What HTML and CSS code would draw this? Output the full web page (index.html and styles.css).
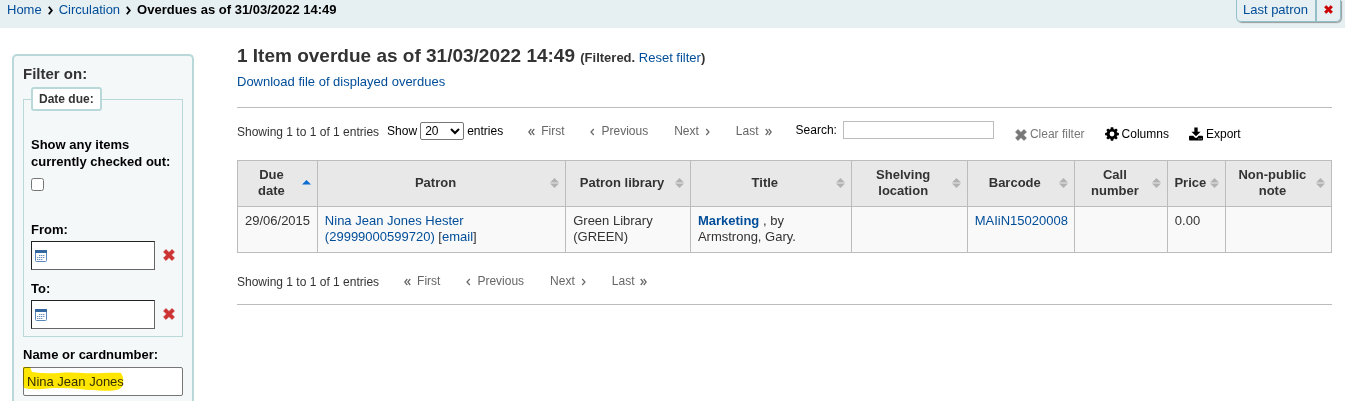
FILE: index.html
```html
<!DOCTYPE html>
<html lang="en">
<head>
<meta charset="utf-8">
<title>Overdues as of 31/03/2022 14:49</title>
<link rel="stylesheet" href="styles.css">
</head>
<body>
<svg class="sprite" aria-hidden="true">
  <symbol id="times" viewBox="0 0 12 12"><path d="M3 .6 6 3.600 9 .6 11.400 3 8.400 6 11.400 9 9 11.400 6 8.400 3 11.400 .6 9 3.600 6 .6 3Z" fill="currentColor" stroke="currentColor" stroke-width=".8" stroke-linejoin="round"/></symbol>
  <symbol id="gear" viewBox="0 0 14 14"><path fill="currentColor" fill-rule="evenodd" d="M5.800 .3h2.400l.4 1.800 1 .4 1.500-1 1.600 1.600-1 1.500.4 1 1.800.3v2.300l-1.800.3-.4 1 1 1.500-1.600 1.600-1.500-1-1 .4-.4 1.700H5.800l-.3-1.700-1-.4-1.500 1-1.700-1.600 1-1.500-.4-1L.1 8.200V5.900l1.800-.3.4-1-1-1.500L3 1.500l1.500 1 1-.4ZM7 4.600a2.400 2.400 0 1 0 0 4.800 2.400 2.400 0 0 0 0-4.800Z"/></symbol>
  <symbol id="download" viewBox="0 0 15 14"><path fill="currentColor" d="M5.700 0h3.600v4.500h3.100L7.500 9.400 2.600 4.500h3.100Z"/><path fill="currentColor" fill-rule="evenodd" d="M1 9h3.600l1.700 1.700q1.200 1 2.400 0L10.400 9H14q1 0 1 1v3q0 1-1 1H1q-1 0-1-1v-3q0-1 1-1Zm9 2.700v1h1.200v-1Zm2.400 0v1h1.200v-1Z"/></symbol>
  <symbol id="calendar" viewBox="0 0 12 12"><rect x=".5" y=".5" width="11" height="11" rx="1" fill="#fff" stroke="#5a87bb"/><path d="M0 0h12v3H0Z" fill="#3568a0"/><path d="M4 5.500h6M2 7.500h8M2 9.500h6" stroke="#6b90c0" stroke-width="1" stroke-dasharray="1.400 .6"/></symbol>
  <symbol id="both" viewBox="0 0 9 10"><path d="M4.500 0 9 4.500H0ZM0 5.500h9L4.500 10Z" fill="#b2b2b2"/></symbol>
  <symbol id="up" viewBox="0 0 9 10"><path d="M4.500 2 9 6.500H0Z" fill="#0d6cd0"/></symbol>
  <symbol id="prev" viewBox="0 0 5 8"><path d="M3.800 1 1 4l2.800 3" fill="none" stroke="currentColor" stroke-width="1.200"/></symbol>
  <symbol id="next" viewBox="0 0 5 8"><path d="M1.200 1 4 4 1.200 7" fill="none" stroke="currentColor" stroke-width="1.200"/></symbol>
  <symbol id="first" viewBox="0 0 7 8"><path d="M3.300 1 .8 4l2.500 3M6.300 1 3.800 4l2.500 3" fill="none" stroke="currentColor" stroke-width="1.200"/></symbol>
  <symbol id="last" viewBox="0 0 7 8"><path d="M.7 1l2.500 3L.7 7M3.700 1l2.500 3-2.500 3" fill="none" stroke="currentColor" stroke-width="1.200"/></symbol>
  <symbol id="crumb" viewBox="0 0 5 9"><path d="M.8.800 3.800 4.500.8 8.200" fill="none" stroke="currentColor" stroke-width="1.800"/></symbol>
</svg>

<header class="topbar">
  <nav class="breadcrumbs" aria-label="Breadcrumb">
    <a href="#">Home</a><svg class="crumb"><use href="#crumb"/></svg><a href="#">Circulation</a><svg class="crumb"><use href="#crumb"/></svg><strong>Overdues as of 31/03/2022 14:49</strong>
  </nav>
  <div class="last-patron">
    <a href="#">Last patron</a>
    <button type="button" class="dismiss" aria-label="Remove"><svg><use href="#times"/></svg></button>
  </div>
</header>

<div class="page">
  <aside>
    <form class="filters">
      <h4>Filter on:</h4>
      <fieldset>
        <legend>Date due:</legend>
        <label for="showall">Show any items currently checked out:</label>
        <input type="checkbox" id="showall">
        <label for="from">From:</label>
        <div class="date-row">
          <div class="date-box"><svg class="calendar"><use href="#calendar"/></svg><input type="text" id="from"></div>
          <button type="button" class="clear-date" aria-label="Clear from date"><svg><use href="#times"/></svg></button>
        </div>
        <label for="to">To:</label>
        <div class="date-row">
          <div class="date-box"><svg class="calendar"><use href="#calendar"/></svg><input type="text" id="to"></div>
          <button type="button" class="clear-date" aria-label="Clear to date"><svg><use href="#times"/></svg></button>
        </div>
      </fieldset>
      <label for="borname" class="name-label">Name or cardnumber:</label>
      <div class="name-box">
        <input type="text" id="borname" value="Nina Jean Jones">
        <svg class="marker" viewBox="0 0 102 24"><path d="M0 0h7l2 5c20 3 30-1 50 1 15 1 30-1 39 0q4 6 1 14c-5 6-20 3-34 3-15-2-32-3-45-1q-12 1-19-1-2-9-1-21Z" fill="#ffe600"/></svg>
      </div>
    </form>
  </aside>

  <main>
    <h1>1 Item overdue as of 31/03/2022 14:49 <span class="filtered">(Filtered. <a href="#">Reset filter</a>)</span></h1>
    <p class="download"><a href="#">Download file of displayed overdues</a></p>
    <section class="results">
      <div class="toolbar">
        <span class="info">Showing 1 to 1 of 1 entries</span>
        <label class="length">Show <select><option>20</option></select> entries</label>
        <nav class="pager" aria-label="Pages">
          <button type="button" disabled><svg class="wide"><use href="#first"/></svg>First</button>
          <button type="button" disabled><svg><use href="#prev"/></svg>Previous</button>
          <button type="button" disabled>Next<svg><use href="#next"/></svg></button>
          <button type="button" disabled>Last<svg class="wide"><use href="#last"/></svg></button>
        </nav>
        <label class="search">Search: <input type="search"></label>
        <div class="actions">
          <button type="button" class="muted"><svg class="icon-times"><use href="#times"/></svg>Clear filter</button>
          <button type="button"><svg><use href="#gear"/></svg>Columns</button>
          <button type="button"><svg><use href="#download"/></svg>Export</button>
        </div>
      </div>
      <table>
        <colgroup><col class="c-due"><col class="c-patron"><col class="c-library"><col class="c-title"><col class="c-shelf"><col class="c-barcode"><col class="c-call"><col class="c-price"><col class="c-note"></colgroup>
        <thead>
          <tr>
            <th><div><span>Due date</span><svg><use href="#up"/></svg></div></th>
            <th><div><span>Patron</span><svg><use href="#both"/></svg></div></th>
            <th><div><span>Patron library</span><svg><use href="#both"/></svg></div></th>
            <th><div><span>Title</span><svg><use href="#both"/></svg></div></th>
            <th><div><span>Shelving location</span><svg><use href="#both"/></svg></div></th>
            <th><div><span>Barcode</span><svg><use href="#both"/></svg></div></th>
            <th><div><span>Call number</span><svg><use href="#both"/></svg></div></th>
            <th><div><span>Price</span><svg><use href="#both"/></svg></div></th>
            <th><div><span>Non-public note</span><svg><use href="#both"/></svg></div></th>
          </tr>
        </thead>
        <tbody>
          <tr>
            <td>29/06/2015</td>
            <td><a href="#">Nina Jean Jones Hester<br>(29999000599720)</a> [<a href="#">email</a>]</td>
            <td>Green Library (GREEN)</td>
            <td><a href="#"><b>Marketing</b></a> , by Armstrong, Gary.</td>
            <td></td>
            <td><a href="#">MAIiN15020008</a></td>
            <td></td>
            <td>0.00</td>
            <td></td>
          </tr>
        </tbody>
      </table>
      <div class="toolbar bottom">
        <span class="info">Showing 1 to 1 of 1 entries</span>
        <nav class="pager" aria-label="Pages, bottom">
          <button type="button" disabled><svg class="wide"><use href="#first"/></svg>First</button>
          <button type="button" disabled><svg><use href="#prev"/></svg>Previous</button>
          <button type="button" disabled>Next<svg><use href="#next"/></svg></button>
          <button type="button" disabled>Last<svg class="wide"><use href="#last"/></svg></button>
        </nav>
      </div>
    </section>
  </main>
</div>
</body>
</html>
```
FILE: styles.css
```css
* { box-sizing: border-box; }

body {
  margin: 0;
  background: #fff;
  color: #333;
  font: 13px/16px "Liberation Sans", Arial, sans-serif;
}

a { color: #004d99; text-decoration: none; }
button, input, select { font: inherit; color: inherit; }
button { border: 0; padding: 0; background: none; }
svg { flex: none; }
.sprite { position: absolute; width: 0; height: 0; }

.topbar {
  display: flex;
  justify-content: space-between;
  align-items: flex-start;
  height: 28px;
  padding: 0 4px 0 7px;
  background: #e6eff2;
}
.breadcrumbs { display: flex; align-items: center; padding-top: 2px; color: #000; }
.crumb { width: 5px; height: 9px; margin: 0 6px; }

.last-patron {
  display: flex;
  height: 22px;
  border: 1px solid #93bfc9;
  border-top: 0;
  border-radius: 0 0 5px 5px;
  box-shadow: 1px 1px 1px #999;
}
.last-patron a { padding: 2px 7px 0 6px; }
.dismiss {
  width: 25px;
  padding-bottom: 2px;
  border-left: 2px solid #93bfc9;
  color: #c00;
}
.dismiss svg { width: 9px; height: 9px; }

.page {
  display: grid;
  grid-template-columns: 182px minmax(0, 1fr);
  gap: 43px;
  min-height: calc(100vh - 28px);
  padding: 26px 13px 0 12px;
}

aside {
  padding: 10px 9px 5px;
  border: 2px solid #b9d8d9;
  border-bottom: 0;
  border-radius: 5px 5px 0 0;
  background: #f4f8f9;
}
h4 { margin: 0 0 5px; font-size: 15px; line-height: 16px; }
fieldset {
  min-width: 0;
  margin: 0;
  padding: 25px 7px 7px;
  border: 1px solid #b9d8d9;
}
legend {
  padding: 2px 6px;
  border: 2px solid #b9d8d9;
  border-radius: 3px;
  background: #fff;
  font-size: 12px;
  font-weight: bold;
}
.filters label { display: block; color: #000; font-weight: bold; line-height: 17px; }
.filters input[type="checkbox"] { display: block; width: 13px; height: 13px; margin: 8px 0 30px; }
.date-row { display: flex; align-items: center; gap: 8px; margin: 3px 0 10px; }
.date-row:last-child { margin-bottom: 0; }
.date-box {
  display: flex;
  align-items: center;
  flex: 1;
  min-width: 0;
  height: 29px;
  padding: 0 3px;
  border: 1px solid;
  border-color: #222 #666 #666 #222;
  background: #fff;
}
.date-box input { flex: 1; min-width: 0; border: 0; outline: 0; background: none; }
.calendar { width: 12px; height: 12px; }
.clear-date { color: #c33; margin-bottom: 2px; line-height: 0; }
.clear-date svg { width: 12px; height: 12px; }
.name-label { margin: 9px 0 4px; }
.name-box { position: relative; }
.name-box input {
  display: block;
  width: 100%;
  height: 29px;
  padding: 0 3px;
  border: 1px solid #767676;
  border-radius: 2px;
  background: #fff;
}
.marker {
  position: absolute;
  top: 0;
  left: 0;
  width: 102px;
  height: 24px;
  mix-blend-mode: multiply;
  pointer-events: none;
}

h1 { margin: -8px 0 0; font-size: 19px; line-height: 20px; }
.filtered { font-size: 13px; }
.filtered a { font-weight: normal; }
.download { margin: 6px 0 17px; }
.results { border: solid #bcbcbc; border-width: 1px 0; }

.toolbar { display: flex; align-items: center; height: 52px; font-size: 12px; }
.info { padding-right: 8px; margin-top: -4px; }
.toolbar > .info { white-space: nowrap; }
.length { display: flex; align-items: center; gap: 3px; margin-top: -6px; color: #000; }
.length select {
  width: 44px;
  height: 18px;
  padding: 0;
  border: 1px solid #767676;
  border-radius: 2px;
  background: #fff;
}
.pager { display: flex; margin: -6px 0 0 12px; }
.pager button { display: flex; align-items: center; gap: 6px; margin: 0 13px; color: #666; }
.pager svg { width: 5px; height: 8px; margin-top: 2px; }
.pager .wide { width: 7px; }
.search { display: flex; align-items: center; gap: 6px; margin: -8px 0 0 11px; color: #000; }
.search input { width: 151px; height: 18px; padding: 0 3px; border: 1px solid #bcbcbc; }
.actions { display: flex; gap: 20px; margin-left: 21px; }
.actions button { display: flex; align-items: center; gap: 3px; color: #000; white-space: nowrap; }
.actions svg { width: 14px; height: 14px; }
.actions .icon-times { width: 12px; height: 12px; margin-top: 2px; }
.actions .muted { color: #777; }

table { width: 100%; border-collapse: collapse; table-layout: fixed; }
.c-due { width: 7.3%; }
.c-patron { width: 22.7%; }
.c-library { width: 11.4%; }
.c-title { width: 14.7%; }
.c-shelf { width: 10.6%; }
.c-barcode { width: 9.8%; }
.c-call { width: 8.5%; }
.c-price { width: 5.3%; }
.c-note { width: 9.7%; }
th, td { border: 1px solid #bcbcbc; }
th { padding: 6px 6px 7px 5px; background: #e8e8e8; }
th div { display: flex; align-items: center; gap: 2px; }
th span { flex: 1; }
th svg { width: 9px; height: 10px; }
td { padding: 6px 6px 7px 7px; background: #f9f9f9; vertical-align: top; }
th:first-child span { padding: 0 4px; }

.bottom { height: 51px; }
.bottom .info { margin-top: 6px; padding: 0; }
.bottom .pager { margin-top: 4px; }
```
